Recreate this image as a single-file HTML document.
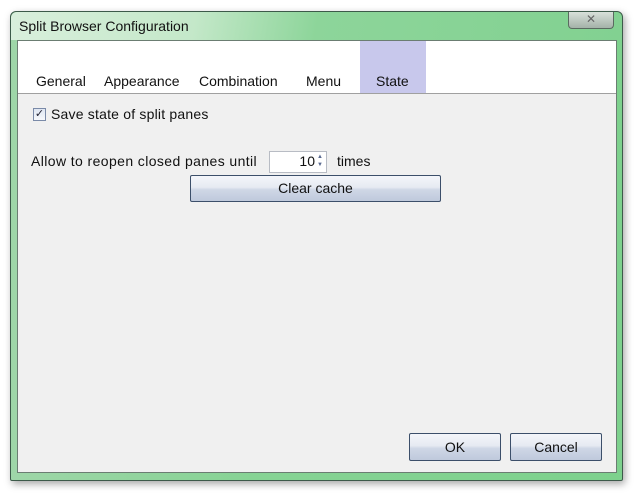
<!DOCTYPE html>
<html><head><style>
body{margin:0;width:640px;height:497px;background:#fff;position:relative;overflow:hidden;font-family:"Liberation Sans",sans-serif;font-size:14px;color:#111}
.win{position:absolute;left:10px;top:11px;width:611px;height:468px;border:1px solid #3d5a4a;border-radius:6px 6px 2px 2px;background:linear-gradient(90deg,#9ed6a8 0%,#86d394 40%,#7dd18d 100%);box-shadow:2px 3px 8px rgba(0,0,0,.35)}
.tb{position:absolute;left:0;top:0;width:611px;height:28px;background:linear-gradient(100deg,#d9efdc 0%,#c4e8c9 30%,#8dd59a 50%,#82d191 100%);border-radius:6px 6px 0 0}
.title{position:absolute;left:8px;top:6px;font-size:14px;color:#111}
.close{position:absolute;left:557px;top:0;width:44px;height:16px;border:1px solid #5a6a60;border-top:none;border-radius:0 0 4px 4px;background:linear-gradient(#d8e0da,#a4b2a8);color:#666;font-size:12px;text-align:center;line-height:15px}
.client{position:absolute;left:6px;top:28px;width:598px;height:431px;border:1px solid #6b7d72;background:#f0f0f0}
.tabs{position:absolute;left:0;top:0;width:598px;height:52px;background:#fff;border-bottom:1px solid #a0a0a0}
.tab{position:absolute;top:32px;font-size:14px}
.sel{position:absolute;left:342px;top:0;width:66px;height:52px;background:#c8c8ec}
.btn{position:absolute;border:1px solid #3c4f6a;border-radius:2px;background:linear-gradient(#f4f6fa 0%,#e6eaf2 45%,#cfd7e6 55%,#bfc9dc 100%);text-align:center;font-size:14px}
</style></head><body>
<div class="win">
<div class="tb"></div>
<div class="title">Split Browser Configuration</div>
<div class="close">✕</div>
<div class="client">
<div class="tabs">
<div class="sel"></div>
<div class="tab" style="left:18px">General</div>
<div class="tab" style="left:86px">Appearance</div>
<div class="tab" style="left:181px">Combination</div>
<div class="tab" style="left:288px">Menu</div>
<div class="tab" style="left:358px">State</div>
</div>
<div style="position:absolute;left:15px;top:67px;width:11px;height:11px;border:1px solid #7a8aa8;background:linear-gradient(#dfe6f2,#f6f8fb);font-size:11px;line-height:11px;text-align:center;color:#223">✓</div>
<div style="position:absolute;left:33px;top:65px;letter-spacing:0.2px">Save state of split panes</div>
<div style="position:absolute;left:13px;top:112px;letter-spacing:0.4px">Allow to reopen closed panes until</div>
<div style="position:absolute;left:251px;top:110px;width:56px;height:20px;border:1px solid #b8bcc4;background:#fff"><span style="position:absolute;right:11px;top:1px">10</span><span style="position:absolute;right:1px;top:1px;width:8px;height:17px;font-size:6px;color:#5a6a90;line-height:8px">▲<br>▼</span></div>
<div style="position:absolute;left:319px;top:112px">times</div>
<div class="btn" style="left:172px;top:134px;width:249px;height:25px;line-height:25px">Clear cache</div>
<div class="btn" style="left:391px;top:392px;width:90px;height:26px;line-height:26px">OK</div>
<div class="btn" style="left:492px;top:392px;width:90px;height:26px;line-height:26px">Cancel</div>
</div>
</div>
</body></html>
